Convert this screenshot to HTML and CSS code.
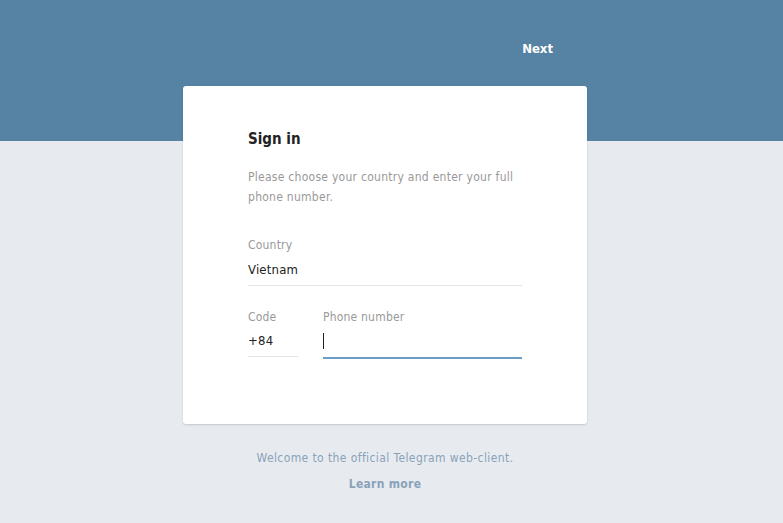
FILE: index.html
```html
<!DOCTYPE html>
<html>
<head>
<meta charset="utf-8">
<link rel="stylesheet" href="styles.css">
</head>
<body>
<div class="header">
  <div class="header-inner">
    <a class="next">Next</a>
  </div>
</div>
<div class="main">
  <div class="card">
    <h1 class="title">Sign in</h1>
    <p class="desc">Please choose your country and enter your full phone number.</p>
    <div class="field">
      <div class="label">Country</div>
      <div class="value">Vietnam</div>
    </div>
    <div class="row">
      <div class="field code">
        <div class="label">Code</div>
        <div class="value">+84</div>
      </div>
      <div class="field phone active">
        <div class="label">Phone number</div>
        <div class="value"><span class="caret"></span></div>
      </div>
    </div>
  </div>
  <div class="welcome">Welcome to the official Telegram web-client.</div>
  <a class="learn">Learn more</a>
</div>
</body>
</html>
```

FILE: styles.css
```css
html, body {
  margin: 0;
  padding: 0;
  height: 100%;
}
body {
  background: #e7ebf0;
  font-family: "DejaVu Sans Condensed", "DejaVu Sans", sans-serif;
  font-size: 12px;
  color: #222;
  overflow: hidden;
}
.header {
  background: #5682a3;
  height: 141px;
  padding-right: 13px;
}
.header-inner {
  width: 404px;
  margin: 0 auto;
  display: flex;
  justify-content: flex-end;
  padding-top: 41px;
}
.next {
  color: #fff;
  font-weight: bold;
  font-size: 13px;
  margin-right: 34px;
  line-height: 16px;
}
.main {
  display: flex;
  flex-direction: column;
  align-items: center;
  margin-top: -55px;
  padding-right: 13px;
}
.card {
  width: 274px;
  background: #fff;
  border-radius: 3px;
  box-shadow: 0 1px 2px rgba(0,0,0,0.15);
  padding: 43px 65px 67px;
}
.title {
  margin: 0;
  font-size: 15px;
  font-weight: bold;
  color: #222;
  line-height: 20px;
}
.desc {
  margin: 18px 0 0;
  color: #999;
  font-size: 12px;
  line-height: 20px;
  letter-spacing: 0.27px;
}
.field {
  margin-top: 30px;
  border-bottom: 1px solid #e4e4e4;
  padding-bottom: 7px;
}
.label {
  color: #999;
  font-size: 12px;
  line-height: 16px;
  letter-spacing: 0.2px;
}
.value {
  margin-top: 9px;
  font-size: 13px;
  line-height: 16px;
  height: 16px;
  color: #222;
  letter-spacing: 0.2px;
}
.row {
  display: flex;
  gap: 25px;
}
.row .field {
  margin-top: 23px;
}
.row .value {
  margin-top: 8px;
}
.code {
  width: 50px;
}
.phone {
  flex: 1;
}
.phone.active {
  border-bottom: 2px solid #6a9cc4;
  padding-bottom: 6px;
  margin-bottom: -2px;
}
.caret {
  display: inline-block;
  width: 1px;
  height: 16px;
  background: #222;
  vertical-align: top;
}
.welcome {
  margin-top: 26px;
  color: #8aa2b8;
  font-size: 12px;
  line-height: 16px;
  letter-spacing: 0.4px;
}
.learn {
  margin-top: 10px;
  color: #8aa2b8;
  font-weight: bold;
  font-size: 12px;
  line-height: 16px;
  letter-spacing: 0.3px;
}
```
